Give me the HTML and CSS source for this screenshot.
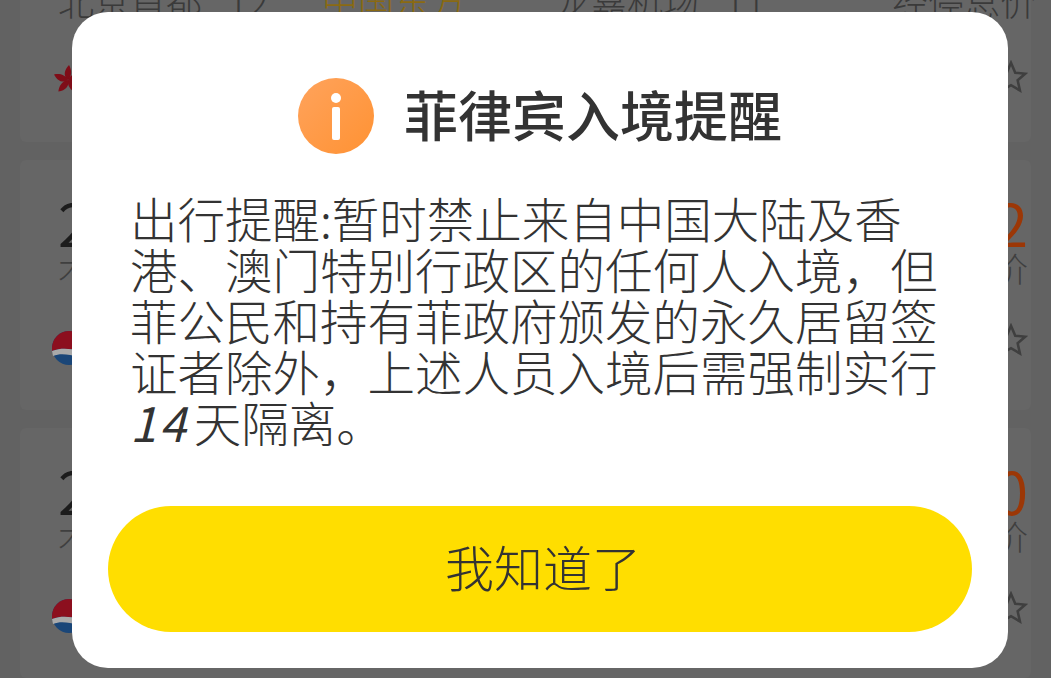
FILE: index.html
```html
<!DOCTYPE html>
<html lang="zh-CN">
<head>
    <meta charset="UTF-8">
    <meta name="viewport" content="width=device-width, initial-scale=1.0">
    <title>菲律宾入境提醒</title>
    <link rel="stylesheet" href="styles.css">
</head>
<body>
    <div class="list">
        <div class="card card-first">
            <div class="route">
                <span>北京首都 T2</span>
                <span class="route-air">中国东方</span>
                <span>龙嘉机场 T1</span>
                <span class="route-stop">经停总价</span>
            </div>
            <div class="card-foot">
                <svg class="logo logo-hk" viewBox="0 0 30 30">
                    <g fill="#7f0d18">
                        <path d="M16 15C11 11 12 5 17 0c3 5 3 11-1 15z"/>
                        <path d="M16 15C11 11 12 5 17 0c3 5 3 11-1 15z" transform="rotate(72 16 15)"/>
                        <path d="M16 15C11 11 12 5 17 0c3 5 3 11-1 15z" transform="rotate(144 16 15)"/>
                        <path d="M16 15C11 11 12 5 17 0c3 5 3 11-1 15z" transform="rotate(216 16 15)"/>
                        <path d="M16 15C11 11 12 5 17 0c3 5 3 11-1 15z" transform="rotate(288 16 15)"/>
                    </g>
                </svg>
                <svg class="star" viewBox="0 0 24 24"><path d="M12 2l3 7 7 .7-5.300 4.600 1.600 7.200L12 17.800l-6.300 3.700 1.600-7.200L2 9.700l7-.7z" fill="none" stroke="#3f3f3f" stroke-width="1.800"/></svg>
            </div>
        </div>
        <div class="card">
            <div class="fare-row">
                <div><div class="fare-num">2</div><div class="fare-sub">术</div></div>
                <div class="fare-right"><div class="fare-price">2</div><div class="fare-sub">价</div></div>
            </div>
            <div class="card-foot">
                <svg class="logo" viewBox="0 0 34 34"><circle cx="17" cy="17" r="17" fill="#1a4678"/><path d="M0 17a17 17 0 0 1 34 0c-9 5-19-3-34 3z" fill="#8c0f1e"/><path d="M0 20c15-6 25 2 34-3-1 3-1 4-3 7-9 3-19-4-30 1z" fill="#a9a9a9"/></svg>
                <svg class="star" viewBox="0 0 24 24"><path d="M12 2l3 7 7 .7-5.300 4.600 1.600 7.200L12 17.800l-6.300 3.700 1.600-7.200L2 9.700l7-.7z" fill="none" stroke="#3f3f3f" stroke-width="1.800"/></svg>
            </div>
        </div>
        <div class="card">
            <div class="fare-row">
                <div><div class="fare-num">2</div><div class="fare-sub">术</div></div>
                <div class="fare-right"><div class="fare-price">0</div><div class="fare-sub">价</div></div>
            </div>
            <div class="card-foot">
                <svg class="logo" viewBox="0 0 34 34"><circle cx="17" cy="17" r="17" fill="#1a4678"/><path d="M0 17a17 17 0 0 1 34 0c-9 5-19-3-34 3z" fill="#8c0f1e"/><path d="M0 20c15-6 25 2 34-3-1 3-1 4-3 7-9 3-19-4-30 1z" fill="#a9a9a9"/></svg>
                <svg class="star" viewBox="0 0 24 24"><path d="M12 2l3 7 7 .7-5.300 4.600 1.600 7.200L12 17.800l-6.300 3.700 1.600-7.200L2 9.700l7-.7z" fill="none" stroke="#3f3f3f" stroke-width="1.800"/></svg>
            </div>
        </div>
    </div>

    <div class="modal">
        <div class="modal-head">
            <svg class="info" viewBox="0 0 76 76">
                <defs>
                    <linearGradient id="infoFill" x1="0" y1="0" x2="1" y2="1">
                        <stop offset="0" stop-color="#ffa35c"/>
                        <stop offset="1" stop-color="#ff9233"/>
                    </linearGradient>
                </defs>
                <circle cx="38" cy="38" r="38" fill="url(#infoFill)"/>
                <circle cx="38" cy="20" r="5" fill="#fff"/>
                <rect x="34" y="29" width="8" height="33" rx="2" fill="#fff"/>
            </svg>
            <h1 class="modal-title">菲律宾入境提醒</h1>
        </div>
        <p class="modal-text">出行提醒:暂时禁止来自中国大陆及香港、澳门特别行政区的任何人入境，但菲公民和持有菲政府颁发的永久居留签证者除外，上述人员入境后需强制实行<span class="num">14</span>天隔离。</p>
        <button class="modal-btn">我知道了</button>
    </div>
</body>
</html>
```

FILE: styles.css
```css
html, body {
    margin: 0;
    height: 678px;
    overflow: hidden;
}
body {
    background: #626262;
    font-family: "Noto Sans CJK SC", "Noto Sans", sans-serif;
    color: #333;
}
.list {
    display: flex;
    flex-direction: column;
    gap: 18px;
    padding: 0 20px;
    margin-top: -20px;
}
.card {
    background: #666;
    height: 250px;
    padding: 32px 3px 0 38px;
    box-sizing: border-box;
    border-radius: 6px;
}
.card-first {
    height: 162px;
    padding-top: 0;
}
.route {
    display: grid;
    grid-template-columns: 264px 233px 337px auto;
    font-size: 36px;
    font-weight: 300;
    line-height: 40px;
    word-spacing: 18px;
    white-space: nowrap;
    color: #3a3a3a;
}
.route-air {
    color: #8a6a12;
}
.card-foot {
    display: flex;
    justify-content: space-between;
    align-items: flex-start;
    margin-top: 45px;
}
.logo {
    width: 34px;
    height: 34px;
    margin-left: -6px;
}
.logo-hk {
    width: 30px;
    height: 30px;
}
.star {
    width: 34px;
    height: 34px;
    margin-top: -8px;
}
.card-first .star {
    margin-top: -5px;
}
.fare-row {
    display: flex;
    justify-content: space-between;
}
.fare-right {
    text-align: right;
}
.fare-num, .fare-price {
    font-size: 58px;
    line-height: 60px;
    color: #1c1c1c;
}
.fare-price {
    color: #9c3706;
}
.fare-sub {
    font-size: 34px;
    line-height: 36px;
    font-weight: 300;
    margin-top: -2px;
    color: #3f3f3f;
}
.modal {
    position: absolute;
    left: 72px;
    top: 12px;
    width: 936px;
    height: 656px;
    box-sizing: border-box;
    padding: 66px 36px 36px;
    background: #fff;
    border-radius: 36px;
    display: flex;
    flex-direction: column;
}
.modal-head {
    display: flex;
    justify-content: center;
    align-items: center;
    gap: 30px;
    height: 76px;
}
.info {
    width: 76px;
    height: 76px;
}
.modal-title {
    margin: -4px 0 0;
    font-size: 54px;
    line-height: 76px;
    font-weight: 500;
    color: #333;
}
.modal-text {
    margin: 38px 0 0;
    padding: 0 32px 0 22px;
    font-size: 47.500px;
    line-height: 51px;
    font-weight: 300;
    color: #333;
}
.num {
    font-style: italic;
    font-weight: 400;
    letter-spacing: 3px;
    margin-right: 5px;
}
.modal-btn {
    margin-top: auto;
    height: 126px;
    padding: 0 0 8px 6px;
    border: none;
    border-radius: 63px;
    background: #ffde00;
    font-family: inherit;
    font-size: 49px;
    font-weight: 300;
    color: #333;
}
```
